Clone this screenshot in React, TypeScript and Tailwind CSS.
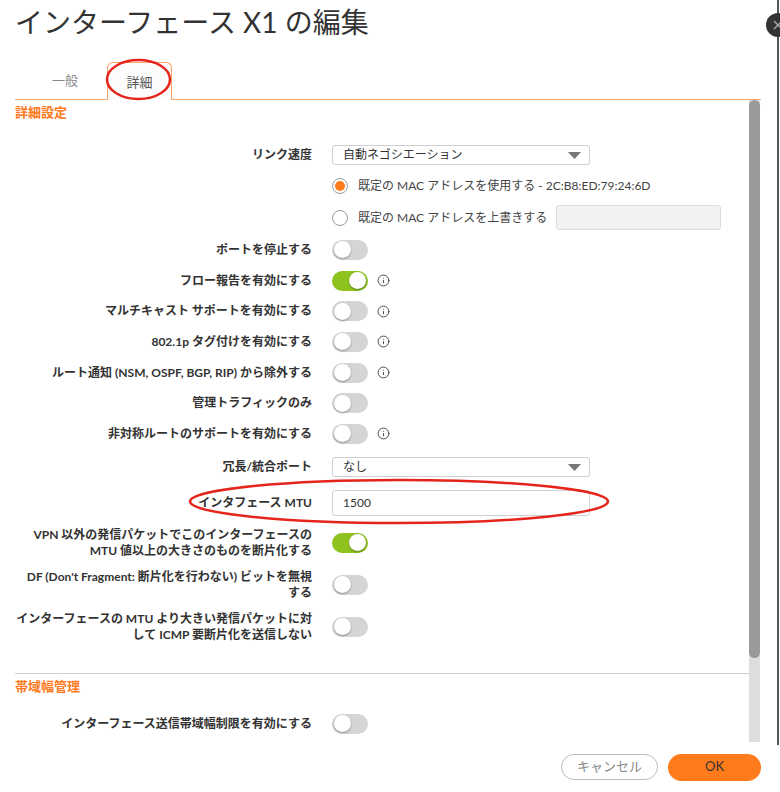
import { Info } from "lucide-react";
import type { ReactNode } from "react";

type RowProps = {
  label?: ReactNode;
  className?: string;
  children?: ReactNode;
};

function Row({ label, className = "", children }: RowProps) {
  return (
    <div className={`flex items-center ${className}`}>
      <div className="w-[297px] shrink-0 text-right text-[12px] font-bold leading-4 text-[#333]">
        {label}
      </div>
      <div className="ml-5 flex items-center">{children}</div>
    </div>
  );
}

function Toggle({ on = false, info = false }: { on?: boolean; info?: boolean }) {
  return (
    <>
      <span
        className={`flex h-[20px] w-[36px] items-center rounded-full px-[2px] ${
          on ? "justify-end bg-[#8dc21f]" : "justify-start bg-[#d5d5d5]"
        }`}
      >
        <span className="h-[17px] w-[17px] rounded-full bg-white shadow-[0_1px_2px_rgba(0,0,0,0.35)]" />
      </span>
      {info && <Info size={13} strokeWidth={1.6} className="ml-[9px] text-[#333]" />}
    </>
  );
}

function Select({ value }: { value: string }) {
  return (
    <div className="flex h-full w-[258px] items-center justify-between rounded-[3px] border border-[#cfcfcf] bg-white pl-[10px] pr-[8px] text-[12px] text-[#333]">
      <span>{value}</span>
      <svg width="13" height="7" viewBox="0 0 13 7">
        <polygon points="0,0 13,0 6.5,7" fill="#777" />
      </svg>
    </div>
  );
}

function Radio({ checked = false }: { checked?: boolean }) {
  return (
    <span className="flex h-[16px] w-[16px] items-center justify-center rounded-full border border-[#9a9a9a] bg-white">
      {checked && <span className="h-[10px] w-[10px] rounded-full bg-[#ff7a1a]" />}
    </span>
  );
}

const toggles = [
  { label: "ポートを停止する", on: false, info: false },
  { label: "フロー報告を有効にする", on: true, info: true },
  { label: "マルチキャスト サポートを有効にする", on: false, info: true },
  { label: "802.1p タグ付けを有効にする", on: false, info: true },
  { label: "ルート通知 (NSM, OSPF, BGP, RIP) から除外する", on: false, info: true },
  { label: "管理トラフィックのみ", on: false, info: false },
  { label: "非対称ルートのサポートを有効にする", on: false, info: true },
];

export default function App() {
  return (
    <div className="relative h-[792px] w-[780px] overflow-hidden bg-white font-['Lato','Noto_Sans_CJK_JP',sans-serif] text-[#333]">
      {/* title */}
      <h1 className="h-[45px] pl-[15px] text-[28px] leading-[44px] font-normal text-[#333]">
        インターフェース X1 の編集
      </h1>

      {/* tabs */}
      <div className="ml-[15px] flex h-[55px] w-[746px] items-end border-b border-[#fba46b]">
        <div className="flex h-[37px] w-[92px] items-center justify-center pl-[8px] text-[13px] text-[#888]">
          一般
        </div>
        <div className="-mb-px flex h-[38px] w-[65px] items-center justify-center rounded-t-[6px] border border-b-0 border-[#fba46b] bg-[#fcfcfc] pt-[2px] text-[13px] text-[#555]">
          詳細
        </div>
      </div>

      {/* body */}
      <div className="flex h-[642px]">
        <div className="w-[749px] overflow-hidden pl-[15px]">
          <div className="flex h-[26px] items-center text-[13px] font-bold text-[#fc7a22]">
            詳細設定
          </div>

          <Row label="リンク速度" className="mt-[17px] h-[24px]">
            <Select value="自動ネゴシエーション" />
          </Row>
          <Row className="mt-[4px] h-[30px]">
            <Radio checked />
            <span className="ml-[10px] text-[12px] text-[#444]">
              既定の MAC アドレスを使用する - 2C:B8:ED:79:24:6D
            </span>
          </Row>
          <Row className="h-[33.5px]">
            <Radio />
            <span className="ml-[10px] text-[12px] text-[#444]">既定の MAC アドレスを上書きする</span>
            <span className="ml-[9px] h-[25px] w-[165px] rounded-[3px] border border-[#dcdcdc] bg-[#f2f2f2]" />
          </Row>

          {toggles.map((t) => (
            <Row key={t.label} label={t.label} className="h-[30.7px]">
              <Toggle on={t.on} info={t.info} />
            </Row>
          ))}

          <Row label="冗長/統合ポート" className="mt-[5.5px] h-[25px]">
            <Select value="なし" />
          </Row>
          <Row label="インタフェース MTU" className="mt-[10px] h-[26px]">
            <div className="flex h-[26px] w-[258px] items-center rounded-[3px] border border-[#cfcfcf] bg-white pl-[10px] text-[12px] text-[#333]">
              1500
            </div>
          </Row>
          <Row
            label={
              <>
                VPN 以外の発信パケットでこのインターフェースの
                <br />
                MTU 値以上の大きさのものを断片化する
              </>
            }
            className="mt-[11px] h-[32px]"
          >
            <Toggle on />
          </Row>
          <Row
            label={
              <>
                DF (Don't Fragment: 断片化を行わない) ビットを無視
                <br />
                する
              </>
            }
            className="mt-[10px] h-[32px]"
          >
            <Toggle />
          </Row>
          <Row
            label={
              <>
                インターフェースの MTU より大きい発信パケットに対
                <br />
                して ICMP 要断片化を送信しない
              </>
            }
            className="mt-[10px] h-[32px]"
          >
            <Toggle />
          </Row>

          <div className="mt-[30px] border-t border-[#d0d0d0]" />
          <div className="flex h-[26px] items-center text-[13px] font-bold text-[#fc7a22]">
            帯域幅管理
          </div>
          <Row label="インターフェース送信帯域幅制限を有効にする" className="mt-[9px] h-[30px]">
            <Toggle />
          </Row>
        </div>

        {/* scrollbar */}
        <div className="flex w-[11px] flex-col bg-[#dedede]">
          <div className="h-[558px] rounded-full bg-[#9a9a9a]" />
        </div>
      </div>

      {/* footer */}
      <div className="flex h-[50px] items-center justify-end gap-[10px] pr-[19px]">
        <button className="h-[26px] w-[97px] rounded-full border border-[#bdbdbd] bg-white text-[13px] text-[#888]">
          キャンセル
        </button>
        <button className="h-[27px] w-[93px] rounded-full bg-[#ff7b1c] text-[13px] text-[#333]">
          OK
        </button>
      </div>

      {/* dialog edge + close button */}
      <div className="absolute top-0 left-[777px] h-[745px] w-[2px] bg-[#555]" />
      <div className="absolute top-[13px] left-[766px] flex h-[24px] w-[24px] items-center justify-center rounded-full bg-[#333]">
        <svg width="10" height="10" viewBox="0 0 10 10">
          <path d="M1 1L9 9M9 1L1 9" stroke="#aaa" strokeWidth="1.4" />
        </svg>
      </div>

      {/* red annotation marks */}
      <svg className="pointer-events-none absolute inset-0" width="780" height="792">
        <ellipse cx="138.5" cy="79.5" rx="31.5" ry="19.5" fill="none" stroke="#e5251c" strokeWidth="2.5" />
        <ellipse cx="399" cy="501.5" rx="209" ry="21.5" fill="none" stroke="#e5251c" strokeWidth="2.5" />
      </svg>
    </div>
  );
}
